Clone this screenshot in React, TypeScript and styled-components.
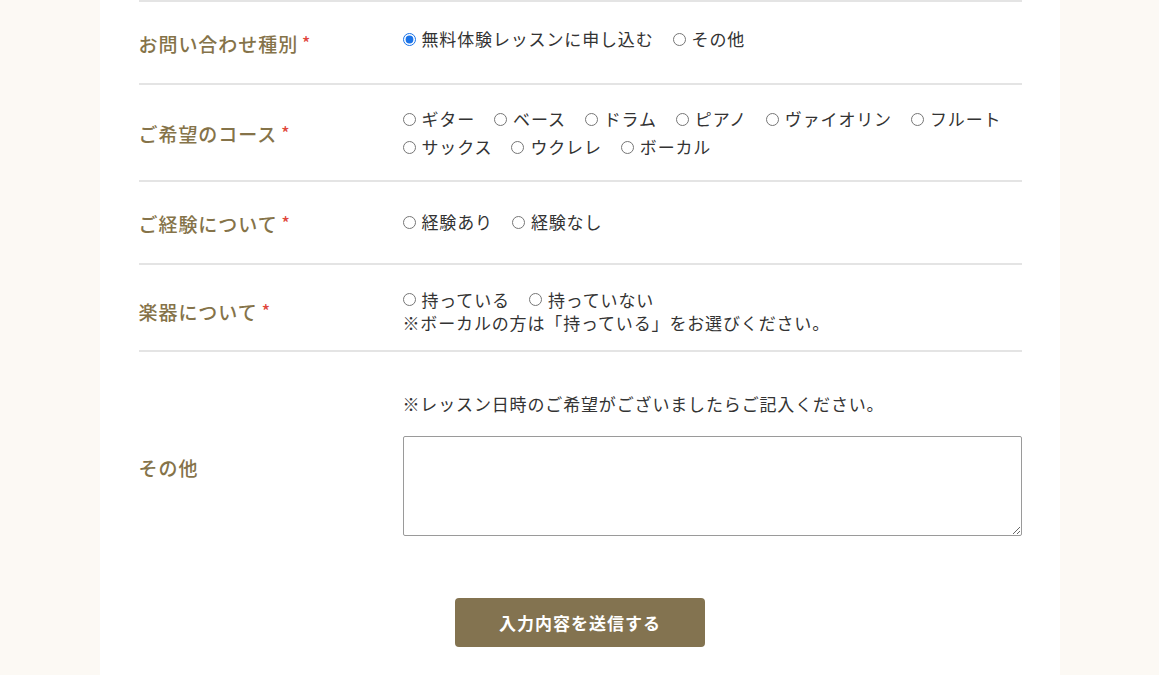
import React from 'react';
import styled, { createGlobalStyle } from 'styled-components';

const GlobalStyle = createGlobalStyle`
  * { box-sizing: border-box; }
  body {
    margin: 0;
    background: #fcf9f4;
    font-family: "Noto Sans CJK JP", "Noto Sans", sans-serif;
    color: #333;
  }
`;

const Page = styled.div`
  width: 960px;
  margin: 0 auto;
  background: #fff;
  padding: 0 38px 40px 39px;
  min-height: 675px;
`;

const Form = styled.form`
  border-top: 2px solid #e4e4e4;
`;

const Row = styled.div<{ $last?: boolean; $min?: number; $pad?: string }>`
  display: flex;
  align-items: center;
  min-height: ${(p) => p.$min ?? 83}px;
  padding: ${(p) => p.$pad ?? '20px 0 19px'};
  border-bottom: ${(p) => (p.$last ? 'none' : '2px solid #e4e4e4')};
`;

const Label = styled.div`
  width: 264px;
  flex-shrink: 0;
  font-size: 19px;
  font-weight: 500;
  letter-spacing: 0.05em;
  color: #857349;
`;

const Required = styled.span`
  color: #e0463b;
  font-size: 17px;
  margin-left: 4px;
  vertical-align: 2px;
`;

const Field = styled.div<{ $lh?: number; $lift?: number }>`
  flex: 1;
  font-size: 17px;
  letter-spacing: 0.05em;
  line-height: ${(p) => p.$lh ?? 28}px;
  margin-bottom: ${(p) => p.$lift ?? 0}px;
`;

const Options = styled.div`
  display: flex;
  flex-wrap: wrap;
  column-gap: 19px;
`;

const Option = styled.label`
  display: inline-flex;
  align-items: center;
  gap: 6px;
  white-space: nowrap;

  input {
    margin: 0;
    width: 13px;
    height: 13px;
    accent-color: #1a73e8;
  }
`;

const Note = styled.p`
  margin: 0;
`;

const FreeField = styled(Field)`
  padding: 18px 0 26px;
`;

const TextArea = styled.textarea`
  display: block;
  width: 100%;
  height: 100px;
  margin-top: 18px;
  border: 1px solid #9a9a9a;
  border-radius: 2px;
  resize: vertical;
  font: inherit;
`;

const ButtonWrap = styled.div`
  display: flex;
  justify-content: center;
  padding-top: 17px;
`;

const Submit = styled.button`
  width: 250px;
  height: 49px;
  border: none;
  border-radius: 4px;
  background: #837350;
  color: #fff;
  font-family: inherit;
  font-size: 17px;
  font-weight: 700;
  letter-spacing: 0.06em;
  cursor: pointer;
`;

type RadioGroupProps = {
  name: string;
  options: string[];
  checked?: string;
};

function RadioGroup({ name, options, checked }: RadioGroupProps) {
  return (
    <Options>
      {options.map((o) => (
        <Option key={o}>
          <input type="radio" name={name} defaultChecked={o === checked} />
          {o}
        </Option>
      ))}
    </Options>
  );
}

export default function App() {
  return (
    <>
      <GlobalStyle />
      <Page>
        <Form onSubmit={(e) => e.preventDefault()}>
          <Row>
            <Label>
              お問い合わせ種別<Required>*</Required>
            </Label>
            <Field $lift={8}>
              <RadioGroup
                name="type"
                options={['無料体験レッスンに申し込む', 'その他']}
                checked="無料体験レッスンに申し込む"
              />
            </Field>
          </Row>
          <Row>
            <Label>
              ご希望のコース<Required>*</Required>
            </Label>
            <Field>
              <RadioGroup
                name="course"
                options={['ギター', 'ベース', 'ドラム', 'ピアノ', 'ヴァイオリン', 'フルート', 'サックス', 'ウクレレ', 'ボーカル']}
              />
            </Field>
          </Row>
          <Row>
            <Label>
              ご経験について<Required>*</Required>
            </Label>
            <Field $lift={2}>
              <RadioGroup name="exp" options={['経験あり', '経験なし']} />
            </Field>
          </Row>
          <Row $pad="23px 0 16px">
            <Label>
              楽器について<Required>*</Required>
            </Label>
            <Field $lh={23}>
              <RadioGroup name="inst" options={['持っている', '持っていない']} />
              <Note>※ボーカルの方は「持っている」をお選びください。</Note>
            </Field>
          </Row>
          <Row $last>
            <Label>その他</Label>
            <FreeField>
              <Note>※レッスン日時のご希望がございましたらご記入ください。</Note>
              <TextArea />
            </FreeField>
          </Row>
          <ButtonWrap>
            <Submit type="submit">入力内容を送信する</Submit>
          </ButtonWrap>
        </Form>
      </Page>
    </>
  );
}
